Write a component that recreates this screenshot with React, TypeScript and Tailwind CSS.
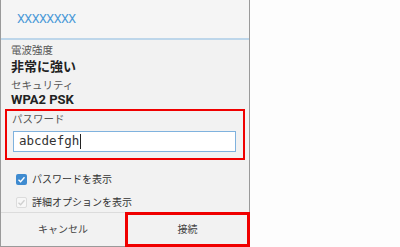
import { useState } from "react";

const font = "font-['Roboto','Noto_Sans_CJK_JP',sans-serif]";

const CheckIcon = ({ color }: { color: string }) => (
  <svg viewBox="0 0 12 12" className="w-[9px] h-[9px]">
    <path d="M2 6.2 L4.8 9 L10 3" fill="none" stroke={color} strokeWidth="1.8" />
  </svg>
);

const App = () => {
  const [password] = useState("abcdefgh");

  return (
    <div className={`w-[400px] h-[247px] bg-[#fdfdfd] ${font}`}>
      <div className="w-[250px] h-[247px] flex flex-col bg-[#f2f2f2] border-l border-r border-b border-[#9a9a9a]">
        {/* header */}
        <div className="h-[40px] shrink-0 flex items-center pl-[16px] bg-[#f5f5f5] border-b-2 border-[#bdd6ea]">
          <span className="text-[12.5px] tracking-[-0.5px] text-[#4b9ad8]">XXXXXXXX</span>
        </div>

        {/* body */}
        <div className="flex-1 flex flex-col px-[10px]">
          <div className="mt-[4px] h-[14px] leading-[14px] text-[10.5px] text-[#555]">電波強度</div>
          <div className="h-[18px] leading-[18px] text-[13px] font-bold text-[#222]">非常に強い</div>
          <div className="mt-[3px] h-[14px] leading-[14px] text-[10.5px] text-[#555]">セキュリティ</div>
          <div className="h-[14px] leading-[14px] text-[13px] font-bold text-[#222]">WPA2 PSK</div>

          <div className="mt-[2px] -mx-[6px] h-[51px] border-2 border-[#f00000] pl-[5px] pr-[7px]">
            <div className="mt-[2px] h-[14px] leading-[14px] text-[10.5px] text-[#555]">パスワード</div>
            <div className="mt-[4px] ml-[1px] h-[21px] flex items-center bg-white border-[1.5px] border-[#7fb2de] px-[5px]">
              <span className="font-['DejaVu_Sans_Mono',monospace] text-[12.5px] text-[#333] leading-none">
                {password}
              </span>
              <span className="ml-px w-px h-[15px] bg-[#222]" />
            </div>
          </div>

          <div className="mt-[11px] h-[16px] flex items-center gap-[5px] pl-[5px]">
            <span className="w-[11px] h-[11px] rounded-[2px] bg-[#3f8bd0] flex items-center justify-center">
              <CheckIcon color="#ffffff" />
            </span>
            <span className="text-[10px] text-[#333]">パスワードを表示</span>
          </div>
          <div className="mt-[7px] h-[16px] flex items-center gap-[5px] pl-[5px]">
            <span className="w-[11px] h-[11px] rounded-[2px] bg-[#f7f7f7] border border-[#dcdcdc] flex items-center justify-center">
              <CheckIcon color="#d0d0d0" />
            </span>
            <span className="text-[10px] text-[#333]">詳細オプションを表示</span>
          </div>
        </div>

        {/* buttons */}
        <div className="h-[34px] shrink-0 grid grid-cols-2 border-t border-[#dcdcdc]">
          <button className="flex items-center justify-center text-[10px] text-[#444]">キャンセル</button>
          <button className="relative -mr-px -mb-px -mt-px flex items-center justify-center border-[3px] border-[#f00000] text-[10px] text-[#444]">
            接続
          </button>
        </div>
      </div>
    </div>
  );
};

export default App;
